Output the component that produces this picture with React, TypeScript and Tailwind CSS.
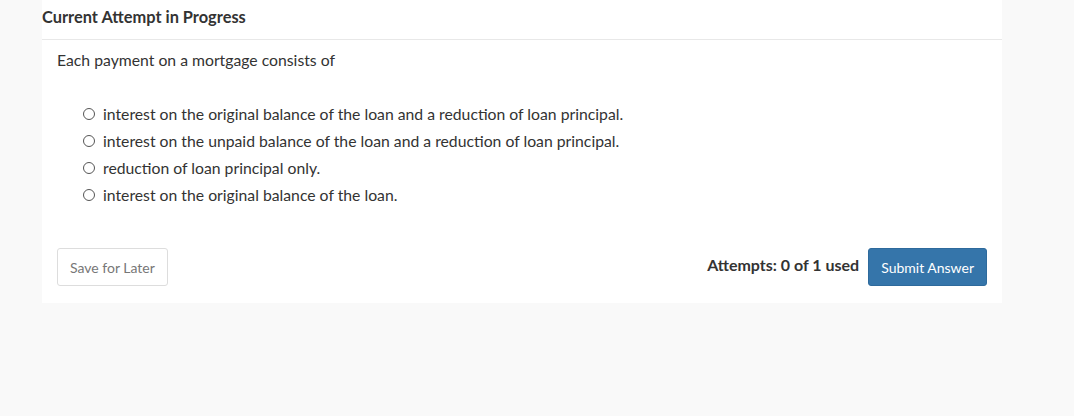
import { useState } from "react";

const options = [
  "interest on the original balance of the loan and a reduction of loan principal.",
  "interest on the unpaid balance of the loan and a reduction of loan principal.",
  "reduction of loan principal only.",
  "interest on the original balance of the loan.",
];

export default function App() {
  const [picked, setPicked] = useState<number | null>(null);

  return (
    <div className="min-h-[416px] bg-[#f9f9f9] pl-[42px] pr-[72px] font-['Lato','Noto_Sans',sans-serif] text-[#333]">
      <div className="w-[960px] bg-white">
        {/* header */}
        <div className="h-[40px] border-b border-[#e8e8e8] pt-[7px]">
          <h2 className="text-[16.4px] font-bold leading-[20px] text-[#333]">Current Attempt in Progress</h2>
        </div>

        {/* question */}
        <div className="px-[15px] pt-[10px]">
          <p className="text-[15.75px] leading-[20px]">Each payment on a mortgage consists of</p>

          <div className="mt-[34px] flex flex-col gap-[7px] pl-[26px]">
            {options.map((o, i) => (
              <label key={i} className="flex h-[20px] cursor-pointer items-center gap-[8px] text-[15.75px] leading-[20px]">
                <input
                  type="radio"
                  name="answer"
                  checked={picked === i}
                  onChange={() => setPicked(i)}
                  className="m-0 h-[12px] w-[12px] appearance-none rounded-full border border-[#555] bg-white checked:border-[4px] checked:border-[#337ab7]"
                />
                <span>{o}</span>
              </label>
            ))}
          </div>

          {/* footer */}
          <div className="mt-[43px] flex items-center justify-between pb-[17px]">
            <button className="h-[38px] rounded-[3px] border border-[#ddd] bg-white px-[12px] text-[14px] text-[#777]">
              Save for Later
            </button>
            <div className="flex items-center gap-[9px]">
              <span className="-mt-[4px] text-[16px] font-bold text-[#333]">Attempts: 0 of 1 used</span>
              <button className="h-[38px] rounded-[3px] border border-[#2e6a9c] bg-[#3575aa] px-[12px] text-[14px] text-white">
                Submit Answer
              </button>
            </div>
          </div>
        </div>
      </div>
    </div>
  );
}
